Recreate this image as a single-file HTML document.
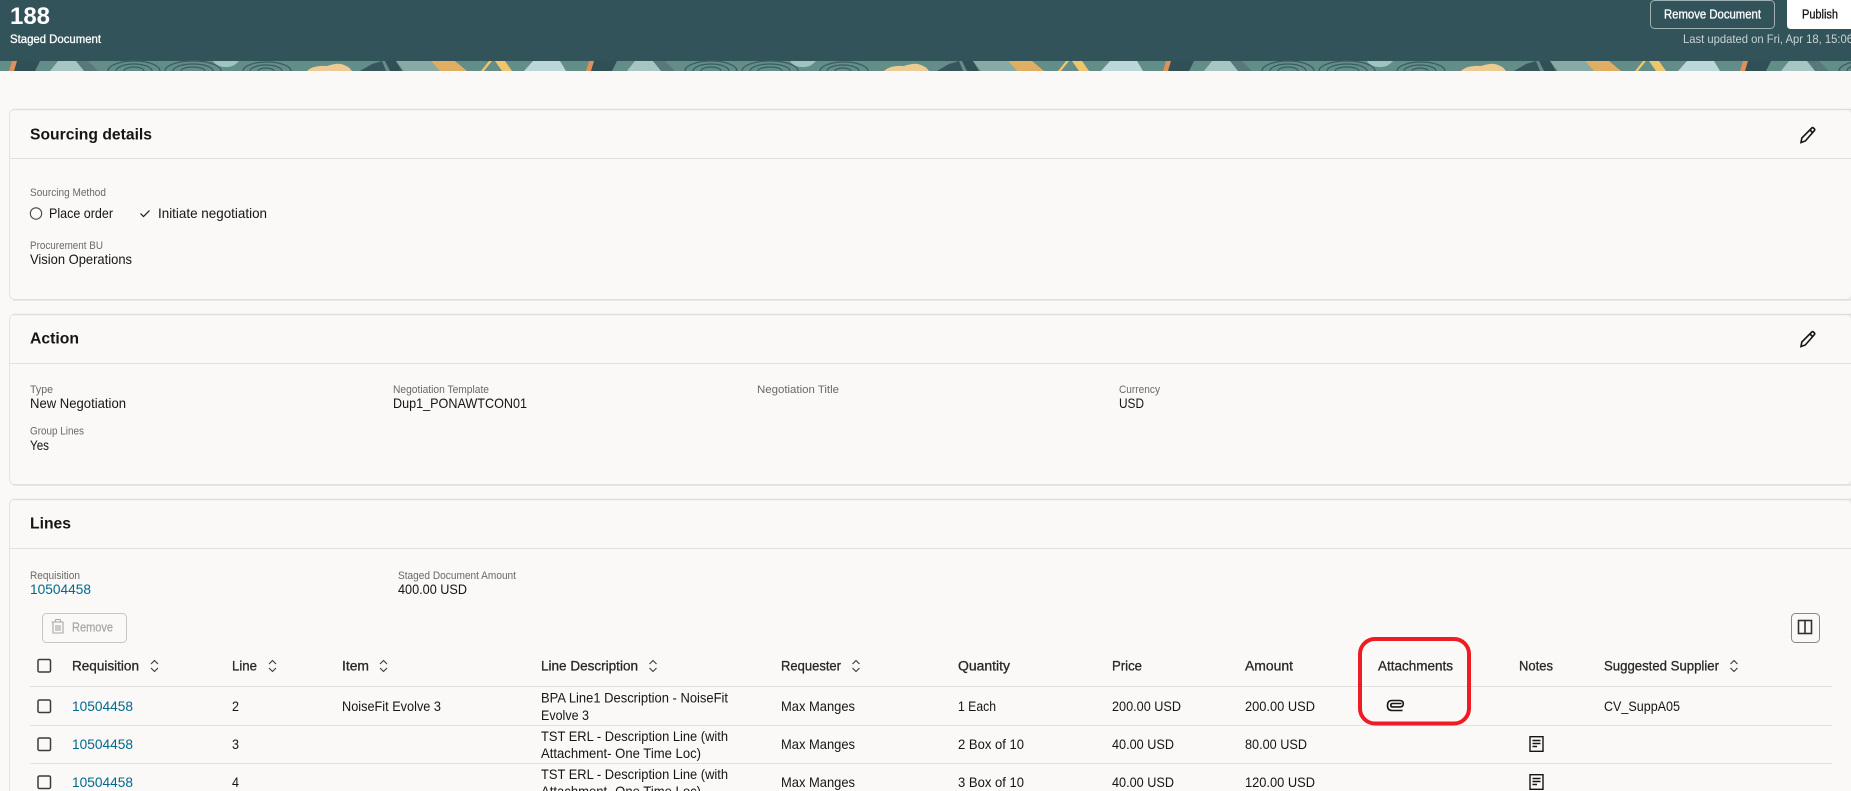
<!DOCTYPE html>
<html><head><meta charset="utf-8"><title>188 Staged Document</title>
<style>
html,body{margin:0;padding:0;width:1851px;height:791px;overflow:hidden;background:#faf9f7}
svg{display:block}
text{font-family:"Liberation Sans",sans-serif;font-size:14px;fill:#161513}
.l{font-size:11px;fill:#6b6864}
.t{font-size:16px;font-weight:700}
.h{font-size:13.5px;fill:#2a2826;stroke:#2a2826;stroke-width:.3}
.a{fill:#00688c}
.line{stroke:#e3e1dd;stroke-width:1}
.card{fill:#faf9f7;stroke:#e6e4e0;stroke-width:1}
.edge{stroke:#e1dfdb;stroke-width:1.500}
.ic{fill:none;stroke:#161513;stroke-width:1.600}
.s{fill:none;stroke:#3a3836;stroke-width:1.100}
.cb{fill:none;stroke:#3d3b39;stroke-width:1.500}
</style></head>
<body>
<svg width="1851" height="791" viewBox="0 0 1851 791" xmlns="http://www.w3.org/2000/svg">
<defs>
<g id="bp">
  <rect x="0" y="61" width="577" height="10" fill="#628d88"/>
  <polygon points="17,61 40,61 35,71 10,71" fill="#2f5055"/>
  <polygon points="12,61 17,61 14,71 9,71" fill="#e09058"/>
  <polygon points="58,61 85,61 90,71 50,71" fill="#a5c6c2"/>
  <polygon points="76,61 88,61 98,71 84,71" fill="#56797a"/>
  <path d="M108 71a26 10 0 0 1 52 0M116 71a18 7 0 0 1 36 0M124 71a10 4 0 0 1 20 0M165 71a28 10 0 0 1 56 0M173 71a20 7 0 0 1 40 0M181 71a12 4 0 0 1 24 0M243 71a24 9 0 0 1 48 0M250 71a16 6 0 0 1 32 0M258 71a8 3 0 0 1 16 0" fill="none" stroke="#3a5d60" stroke-width="1.200"/>
  <path d="M213 61h26q-6 7-14 6q-8 0-12-6z" fill="#9fc5c2"/>
  <path d="M307 71q6-6 20-5q9-3 14-2q8 2 11 7z" fill="#ecca94"/>
  <polygon points="360,71 372,64 382,61 386,71" fill="#35565a"/>
  <polygon points="385,61 396,61 402,71 390,71" fill="#2f5055"/>
  <polygon points="396,61 431,61 440,71 404,71" fill="#86aaa5"/>
  <polygon points="431,61 455,61 467,71 440,71" fill="#e0ae63"/>
  <polygon points="489,61 492,61 484,71 481,71" fill="#f0c66a"/>
  <polygon points="495,61 505,61 512,71 502,71" fill="#f0c66a"/>
  <polygon points="533,61 560,61 566,71 524,71" fill="#bcd7d9"/>
</g>
</defs>

<rect width="1851" height="791" fill="#faf9f7"/>
<rect width="1851" height="61" fill="#33535a"/>
<use href="#bp" x="0"/><use href="#bp" x="577"/><use href="#bp" x="1154"/><use href="#bp" x="1731"/>

<text x="10" y="24" style="font-size:24px;font-weight:700;fill:#fff" textLength="40" lengthAdjust="spacingAndGlyphs">188</text>
<text x="10" y="43" style="font-size:12px;fill:#fff;stroke:#fff;stroke-width:.3" textLength="91" lengthAdjust="spacingAndGlyphs">Staged Document</text>

<rect x="1650.500" y="0.500" width="124" height="28" rx="4" fill="none" stroke="#9fb1b3"/>
<text x="1664" y="18.500" style="font-size:12.500px;fill:#fff;stroke:#fff;stroke-width:.3" textLength="97" lengthAdjust="spacingAndGlyphs">Remove Document</text>
<path d="M1787 0h64v29h-60q-4 0-4-4z" fill="#fff"/>
<text x="1802" y="18.500" style="font-size:12.500px;stroke:#161513;stroke-width:.3" textLength="36" lengthAdjust="spacingAndGlyphs">Publish</text>
<text x="1683" y="43" style="font-size:12px;fill:#c9d3d4" textLength="170" lengthAdjust="spacingAndGlyphs">Last updated on Fri, Apr 18, 15:06</text>

<!-- Card 1 -->
<rect class="card" x="9.500" y="109.500" width="1842" height="190" rx="5"/>
<line class="edge" x1="13" x2="1851" y1="109.500" y2="109.500"/>
<line class="edge" x1="13" x2="1851" y1="300" y2="300"/>
<line class="line" x1="10" x2="1851" y1="158.500" y2="158.500"/>
<text class="t" x="30" y="139.500" textLength="122" lengthAdjust="spacingAndGlyphs">Sourcing details</text>
<path class="ic" d="M1801 142.500l.8-4.500L1811.800 128q.8-.8 1.600 0l1 1q.8.8 0 1.600L1805.300 141zM1810 130l3 3"/>
<text class="l" x="30" y="196" textLength="76" lengthAdjust="spacingAndGlyphs">Sourcing Method</text>
<circle cx="36" cy="213.500" r="5.700" fill="none" stroke="#4a4846" stroke-width="1.100"/>
<text x="49" y="218" textLength="64" lengthAdjust="spacingAndGlyphs">Place order</text>
<path d="M140.500 213.500l3 3 6-6" fill="none" stroke="#161513" stroke-width="1.200"/>
<text x="158" y="218" textLength="109" lengthAdjust="spacingAndGlyphs">Initiate negotiation</text>
<text class="l" x="30" y="249" textLength="73" lengthAdjust="spacingAndGlyphs">Procurement BU</text>
<text x="30" y="264" textLength="102" lengthAdjust="spacingAndGlyphs">Vision Operations</text>

<!-- Card 2 -->
<rect class="card" x="9.500" y="314.500" width="1842" height="170" rx="5"/>
<line class="edge" x1="13" x2="1851" y1="314.500" y2="314.500"/>
<line class="edge" x1="13" x2="1851" y1="485" y2="485"/>
<line class="line" x1="10" x2="1851" y1="363.500" y2="363.500"/>
<text class="t" x="30" y="343.500" textLength="49" lengthAdjust="spacingAndGlyphs">Action</text>
<path class="ic" d="M1801 346.500l.8-4.500L1811.800 332q.8-.8 1.600 0l1 1q.8.8 0 1.600L1805.300 345zM1810 334l3 3"/>
<text class="l" x="30" y="393" textLength="23" lengthAdjust="spacingAndGlyphs">Type</text>
<text x="30" y="408" textLength="96" lengthAdjust="spacingAndGlyphs">New Negotiation</text>
<text class="l" x="393" y="393" textLength="96" lengthAdjust="spacingAndGlyphs">Negotiation Template</text>
<text x="393" y="408" textLength="134" lengthAdjust="spacingAndGlyphs">Dup1_PONAWTCON01</text>
<text class="l" x="757" y="393" textLength="82" lengthAdjust="spacingAndGlyphs">Negotiation Title</text>
<text class="l" x="1119" y="393" textLength="41" lengthAdjust="spacingAndGlyphs">Currency</text>
<text x="1119" y="408" textLength="25" lengthAdjust="spacingAndGlyphs">USD</text>
<text class="l" x="30" y="434.500" textLength="54" lengthAdjust="spacingAndGlyphs">Group Lines</text>
<text x="30" y="450" textLength="19" lengthAdjust="spacingAndGlyphs">Yes</text>

<!-- Card 3 -->
<rect class="card" x="9.500" y="499.500" width="1842" height="320" rx="5"/>
<line class="edge" x1="13" x2="1851" y1="499.500" y2="499.500"/>
<line class="line" x1="10" x2="1851" y1="548.500" y2="548.500"/>
<text class="t" x="30" y="528.500" textLength="41" lengthAdjust="spacingAndGlyphs">Lines</text>
<text class="l" x="30" y="579" textLength="50" lengthAdjust="spacingAndGlyphs">Requisition</text>
<text class="a" x="30" y="594" textLength="61" lengthAdjust="spacingAndGlyphs">10504458</text>
<text class="l" x="398" y="579" textLength="118" lengthAdjust="spacingAndGlyphs">Staged Document Amount</text>
<text x="398" y="594" textLength="69" lengthAdjust="spacingAndGlyphs">400.00 USD</text>

<rect x="42.500" y="613.500" width="84" height="29" rx="4" fill="none" stroke="#c9c6c2"/>
<path d="M51.500 622h12M55.500 622v-1.500q0-1 1-1h3q1 0 1 1v1M53 622v11h10v-11M56 625v6M58 625v6M60 625v6" fill="none" stroke="#a9a6a2" stroke-width="1.100"/>
<text x="72" y="631.500" style="font-size:13px;fill:#a8a5a1;stroke:#a8a5a1;stroke-width:.2" textLength="41" lengthAdjust="spacingAndGlyphs">Remove</text>

<rect x="1791.500" y="613.500" width="28" height="29" rx="4" fill="none" stroke="#8a8885"/>
<rect x="1798.500" y="620.500" width="13" height="13" fill="none" stroke="#33312f" stroke-width="1.600"/>
<line x1="1805" x2="1805" y1="620" y2="634" stroke="#33312f" stroke-width="1.600"/>

<!-- header row -->
<rect class="cb" x="38" y="659.500" width="12.500" height="12.500" rx="1.500"/>
<text class="h" x="72" y="670.500" textLength="67" lengthAdjust="spacingAndGlyphs">Requisition</text>
<path class="s" d="M151 664l3.500-3.500 3.500 3.500M151 668l3.500 3.500 3.500-3.500"/>
<text class="h" x="232" y="670.500" textLength="25" lengthAdjust="spacingAndGlyphs">Line</text>
<path class="s" d="M269 664l3.500-3.500 3.500 3.500M269 668l3.500 3.500 3.500-3.500"/>
<text class="h" x="342" y="670.500" textLength="27" lengthAdjust="spacingAndGlyphs">Item</text>
<path class="s" d="M380 664l3.500-3.500 3.500 3.500M380 668l3.500 3.500 3.500-3.500"/>
<text class="h" x="541" y="670.500" textLength="97" lengthAdjust="spacingAndGlyphs">Line Description</text>
<path class="s" d="M649.500 664l3.500-3.500 3.500 3.500M649.500 668l3.500 3.500 3.500-3.500"/>
<text class="h" x="781" y="670.500" textLength="60" lengthAdjust="spacingAndGlyphs">Requester</text>
<path class="s" d="M852.500 664l3.500-3.500 3.500 3.500M852.500 668l3.500 3.500 3.500-3.500"/>
<text class="h" x="958" y="670.500" textLength="52" lengthAdjust="spacingAndGlyphs">Quantity</text>
<text class="h" x="1112" y="670.500" textLength="30" lengthAdjust="spacingAndGlyphs">Price</text>
<text class="h" x="1245" y="670.500" textLength="48" lengthAdjust="spacingAndGlyphs">Amount</text>
<text class="h" x="1378" y="670.500" textLength="75" lengthAdjust="spacingAndGlyphs">Attachments</text>
<text class="h" x="1519" y="670.500" textLength="34" lengthAdjust="spacingAndGlyphs">Notes</text>
<text class="h" x="1604" y="670.500" textLength="115" lengthAdjust="spacingAndGlyphs">Suggested Supplier</text>
<path class="s" d="M1730.500 664l3.500-3.500 3.500 3.500M1730.500 668l3.500 3.500 3.500-3.500"/>

<line class="line" x1="30" x2="1832" y1="686.500" y2="686.500"/>
<line class="line" x1="30" x2="1832" y1="725.500" y2="725.500"/>
<line class="line" x1="30" x2="1832" y1="763.500" y2="763.500"/>

<!-- row 1 -->
<rect class="cb" x="38" y="700" width="12.500" height="12.500" rx="1.500"/>
<text class="a" x="72" y="711" textLength="61" lengthAdjust="spacingAndGlyphs">10504458</text>
<text x="232" y="711" textLength="7" lengthAdjust="spacingAndGlyphs">2</text>
<text x="342" y="711" textLength="99" lengthAdjust="spacingAndGlyphs">NoiseFit Evolve 3</text>
<text x="541" y="702.500" textLength="187" lengthAdjust="spacingAndGlyphs">BPA Line1 Description - NoiseFit</text>
<text x="541" y="720" textLength="48" lengthAdjust="spacingAndGlyphs">Evolve 3</text>
<text x="781" y="711" textLength="74" lengthAdjust="spacingAndGlyphs">Max Manges</text>
<text x="958" y="711" textLength="38" lengthAdjust="spacingAndGlyphs">1 Each</text>
<text x="1112" y="711" textLength="69" lengthAdjust="spacingAndGlyphs">200.00 USD</text>
<text x="1245" y="711" textLength="70" lengthAdjust="spacingAndGlyphs">200.00 USD</text>
<path d="M1402.500 710.500h-10.500q-4.500 0-4.500-5t4.500-5h7.500q3.800 0 3.800 3.200t-3.800 3.200h-7q-1.700 0-1.700-1.700t1.700-1.700h9" fill="none" stroke="#161513" stroke-width="1.600"/>
<text x="1604" y="711" textLength="76" lengthAdjust="spacingAndGlyphs">CV_SuppA05</text>

<!-- row 2 -->
<rect class="cb" x="38" y="738" width="12.500" height="12.500" rx="1.500"/>
<text class="a" x="72" y="749" textLength="61" lengthAdjust="spacingAndGlyphs">10504458</text>
<text x="232" y="749" textLength="7" lengthAdjust="spacingAndGlyphs">3</text>
<text x="541" y="741" textLength="187" lengthAdjust="spacingAndGlyphs">TST ERL - Description Line (with</text>
<text x="541" y="758" textLength="160" lengthAdjust="spacingAndGlyphs">Attachment- One Time Loc)</text>
<text x="781" y="749" textLength="74" lengthAdjust="spacingAndGlyphs">Max Manges</text>
<text x="958" y="749" textLength="66" lengthAdjust="spacingAndGlyphs">2 Box of 10</text>
<text x="1112" y="749" textLength="62" lengthAdjust="spacingAndGlyphs">40.00 USD</text>
<text x="1245" y="749" textLength="62" lengthAdjust="spacingAndGlyphs">80.00 USD</text>
<g fill="none" stroke="#161513" stroke-width="1.400"><rect x="1530" y="736.700" width="13" height="14.600"/><path d="M1532.500 740.500h8M1532.500 743.500h8M1532.500 746.500h4.500"/></g>

<!-- row 3 -->
<rect class="cb" x="38" y="776" width="12.500" height="12.500" rx="1.500"/>
<text class="a" x="72" y="787" textLength="61" lengthAdjust="spacingAndGlyphs">10504458</text>
<text x="232" y="787" textLength="7" lengthAdjust="spacingAndGlyphs">4</text>
<text x="541" y="779" textLength="187" lengthAdjust="spacingAndGlyphs">TST ERL - Description Line (with</text>
<text x="541" y="796" textLength="160" lengthAdjust="spacingAndGlyphs">Attachment- One Time Loc)</text>
<text x="781" y="787" textLength="74" lengthAdjust="spacingAndGlyphs">Max Manges</text>
<text x="958" y="787" textLength="66" lengthAdjust="spacingAndGlyphs">3 Box of 10</text>
<text x="1112" y="787" textLength="62" lengthAdjust="spacingAndGlyphs">40.00 USD</text>
<text x="1245" y="787" textLength="70" lengthAdjust="spacingAndGlyphs">120.00 USD</text>
<g fill="none" stroke="#161513" stroke-width="1.400"><rect x="1530" y="774.700" width="13" height="14.600"/><path d="M1532.500 778.500h8M1532.500 781.500h8M1532.500 784.500h4.500"/></g>

<!-- red highlight -->
<rect x="1360" y="639" width="109" height="84.500" rx="15" fill="none" stroke="#ee1c25" stroke-width="4"/>
</svg>
</body></html>
